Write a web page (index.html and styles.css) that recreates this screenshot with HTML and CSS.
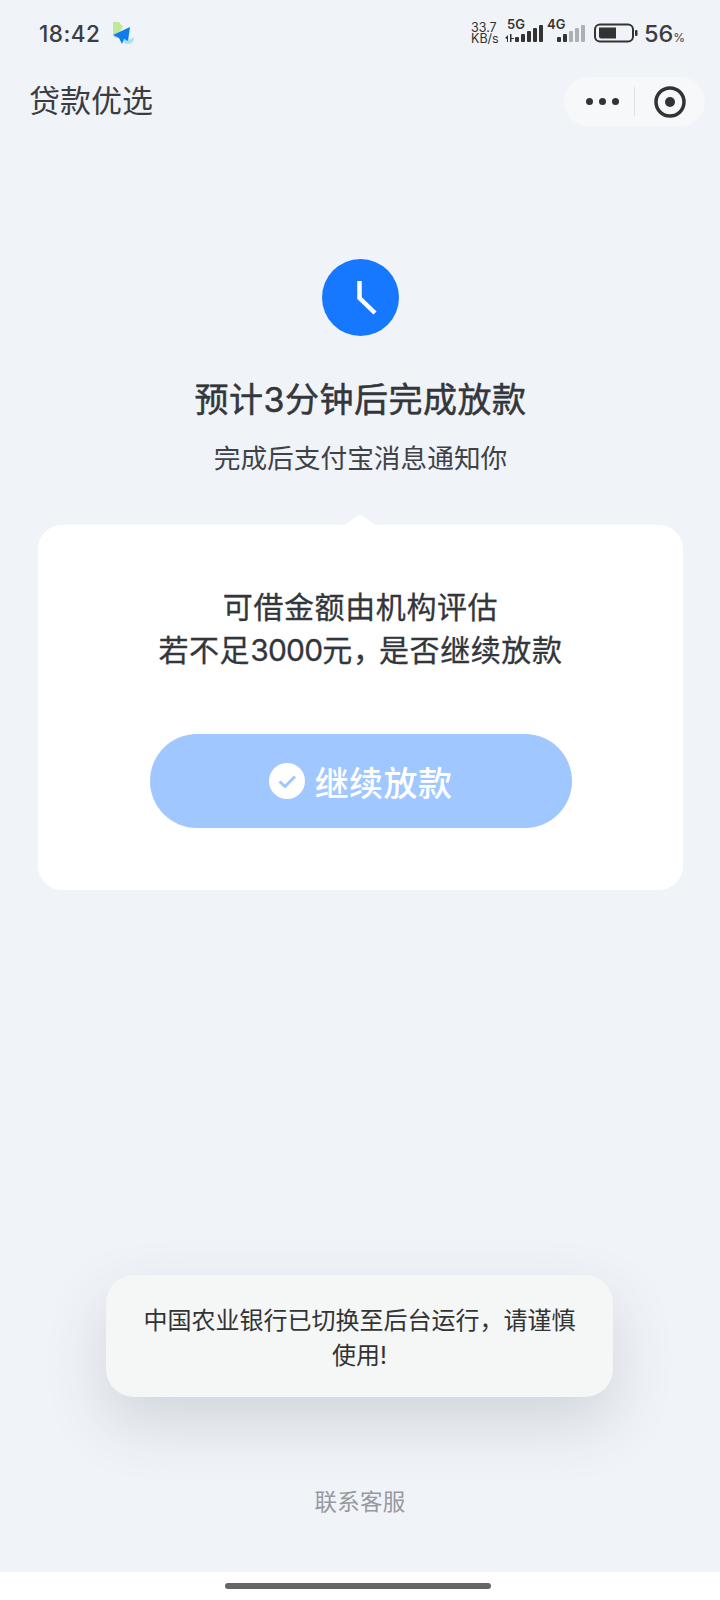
FILE: index.html
```html
<!DOCTYPE html>
<html lang="zh-CN">
<head>
<meta charset="utf-8">
<title>贷款优选</title>
<link rel="stylesheet" href="styles.css">
</head>
<body>
<div class="screen">
  <header class="status">
    <div class="status-left">
      <span class="time">18:42</span>
      <svg class="app-icon" width="24" height="24" viewBox="0 0 24 24">
        <path d="M2 1h6l4 5-4 6-6 2z" fill="#bfe89a"/>
        <path d="M12 19c3 0 6 0 8-1l3-2c0 4-2 7-6 7-3 0-5-2-5-4z" fill="#a4e2f7"/>
        <path d="M2 14l2 3 4 0z" fill="#a4e2f7"/>
        <path d="M19 6L2 14l6 3 3 6 2-5 4 2z" fill="#0f7bf0"/>
      </svg>
    </div>
    <div class="status-right">
      <div class="speed"><span>33.7</span><span>KB/s</span></div>
      <div class="net net-5g">
        <span class="net-label">5G</span>
        <svg width="40" height="18" viewBox="0 0 40 18">
          <path d="M0 13l3-3v7H2v-3zM5 9h1.500v5H9v-1h-2.500v4H5z" fill="#333"/>
          <rect x="10" y="12" width="4" height="5" rx="1" fill="#333"/>
          <rect x="16" y="9" width="4" height="8" rx="1" fill="#333"/>
          <rect x="22" y="6" width="4" height="11" rx="1" fill="#333"/>
          <rect x="28" y="3" width="4" height="14" rx="1" fill="#333"/>
          <rect x="34" y="0" width="4" height="17" rx="1" fill="#333"/>
        </svg>
      </div>
      <div class="net net-4g">
        <span class="net-label">4G</span>
        <svg width="30" height="18" viewBox="0 0 30 18">
          <rect x="0" y="12" width="4" height="5" rx="1" fill="#333"/>
          <rect x="6" y="9" width="4" height="8" rx="1" fill="#333"/>
          <rect x="12" y="6" width="4" height="11" rx="1" fill="#adb0b5"/>
          <rect x="18" y="3" width="4" height="14" rx="1" fill="#adb0b5"/>
          <rect x="24" y="0" width="4" height="17" rx="1" fill="#adb0b5"/>
        </svg>
      </div>
      <svg class="battery" width="44" height="20" viewBox="0 0 44 20">
        <rect x="1" y="1.500" width="38" height="17" rx="5" fill="none" stroke="#333" stroke-width="2"/>
        <path d="M5 4.500h17v11H7a2 2 0 0 1-2-2z" fill="#333"/>
        <rect x="41" y="7" width="2.500" height="6" rx="1" fill="#333"/>
      </svg>
      <span class="battery-level">56<small>%</small></span>
    </div>
  </header>

  <nav class="navbar">
    <h1 class="nav-title">贷款优选</h1>
    <div class="capsule">
      <div class="dots"><i></i><i></i><i></i></div>
      <span class="capsule-line"></span>
      <svg width="32" height="32" viewBox="0 0 32 32">
        <circle cx="16" cy="16" r="14" fill="none" stroke="#333" stroke-width="3.500"/>
        <circle cx="16" cy="16" r="5" fill="#333"/>
      </svg>
    </div>
  </nav>

  <main class="content">
    <svg class="clock" width="77" height="77" viewBox="0 0 77 77">
      <circle cx="38.500" cy="38.500" r="38.500" fill="#1677ff"/>
      <path d="M37.500 22v17L53 54" fill="none" stroke="#fff" stroke-width="4.500"/>
    </svg>
    <h2 class="title">预计3分钟后完成放款</h2>
    <p class="subtitle">完成后支付宝消息通知你</p>
    <section class="card">
      <p class="card-text">可借金额由机构评估<br>若不足<span class="num">3000</span>元<span class="comma">，</span>是否继续放款</p>
      <button class="confirm" type="button">
        <svg width="36" height="36" viewBox="0 0 36 36">
          <circle cx="18" cy="18" r="18" fill="#fff"/>
          <path d="M10.500 18.500l5.500 5 10-10" fill="none" stroke="#a0c7ff" stroke-width="3"/>
        </svg>
        <span>继续放款</span>
      </button>
    </section>
  </main>

  <a class="service">联系客服</a>
  <div class="home-area"><span class="home-bar"></span></div>

  <div class="toast">中国农业银行已切换至后台运行，请谨慎使用!</div>
</div>
</body>
</html>
```

FILE: styles.css
```css
* { box-sizing: border-box; }
html, body { margin: 0; padding: 0; }
body {
  font-family: Inter, "Noto Sans CJK SC", "Noto Sans", sans-serif;
  color: #333;
  background: #fff;
}
.screen {
  position: relative;
  width: 720px;
  height: 1600px;
  background: #f0f3f8;
  display: flex;
  flex-direction: column;
  overflow: hidden;
}
.status {
  height: 66px;
  display: flex;
  justify-content: space-between;
  align-items: center;
  padding: 0 38px 0 39px;
}
.status-left { display: flex; align-items: center; gap: 11px; }
.time {
  font-size: 22.500px;
  font-weight: 500;
  letter-spacing: 0.500px;
  color: #3a3d42;
}
.status-right { display: flex; align-items: center; }
.speed {
  display: flex;
  flex-direction: column;
  font-size: 12.500px;
  line-height: 11px;
  width: 34px;
  align-items: flex-start;
}
.net { position: relative; height: 20px; }
.net svg { display: block; margin-top: 2px; }
.net-5g { width: 42px; }
.net-4g { width: 39px; padding-left: 10px; }
.net-label {
  position: absolute;
  top: -5px;
  font-size: 13px;
  font-weight: 600;
  line-height: 12px;
}
.net-5g .net-label { left: 2px; }
.net-4g .net-label { left: 0; }
.battery { margin-left: 8px; }
.battery-level {
  width: 38px;
  margin-left: 6px;
  font-size: 23.500px;
  font-weight: 500;
  color: #3a3d42;
  white-space: nowrap;
}
.battery-level small { font-size: 12px; font-weight: 400; }
.navbar {
  height: 71px;
  display: flex;
  align-items: center;
  justify-content: space-between;
  padding: 0 15px 0 29px;
}
.nav-title {
  margin: 0 0 1px;
  font-size: 31px;
  font-weight: 400;
  line-height: 40px;
  color: #3a3d42;
}
.capsule {
  width: 141px;
  height: 49px;
  border-radius: 25px;
  background: #f7f8fa;
  display: flex;
  align-items: center;
  padding-left: 22px;
}
.dots { display: flex; gap: 6px; }
.dots i { width: 7px; height: 7px; border-radius: 50%; background: #333; }
.capsule-line { width: 1px; height: 29px; background: #dfe1e4; margin: 0 19px 0 15px; }
.content {
  flex: 1;
  display: flex;
  flex-direction: column;
  align-items: center;
  padding: 122px 37px 0 38px;
}
.clock { display: block; }
.title {
  margin: 40px 0 0;
  font-size: 34px;
  font-weight: 400;
  -webkit-text-stroke: 0.500px #33363b;
  letter-spacing: 0.500px;
  line-height: 48px;
  color: #33363b;
}
.subtitle {
  margin: 15px 0 0;
  font-size: 26.700px;
  line-height: 38px;
  color: #3f4247;
}
.card {
  position: relative;
  width: 645px;
  height: 365px;
  margin-top: 48px;
  padding-top: 61px;
  background: #fff;
  border-radius: 24px;
  display: flex;
  flex-direction: column;
  align-items: center;
}
.card::before {
  content: "";
  position: absolute;
  top: -10px;
  left: 306px;
  width: 32px;
  height: 11px;
  background: #fff;
  clip-path: polygon(0 100%, 40% 8%, 50% 0, 60% 8%, 100% 100%);
}
.card-text {
  margin: 0;
  font-size: 30px;
  font-weight: 400;
  -webkit-text-stroke: 0.300px #33363b;
  letter-spacing: 0.600px;
  line-height: 43px;
  text-align: center;
  color: #33363b;
}
.num { letter-spacing: -0.800px; }
.comma { letter-spacing: -4px; }
.confirm {
  width: 422px;
  height: 94px;
  margin-top: 62px;
  border: 0;
  border-radius: 47px;
  background: #a0c7ff;
  color: #fff;
  font-family: inherit;
  font-size: 34px;
  font-weight: 500;
  letter-spacing: 0.400px;
  display: flex;
  align-items: center;
  justify-content: center;
  gap: 10px;
  padding: 0;
}
.confirm svg { display: block; }
.service {
  text-align: center;
  font-size: 22.500px;
  letter-spacing: 0.200px;
  line-height: 32px;
  color: #96999f;
  margin-bottom: 54px;
}
.home-area {
  height: 28px;
  background: #fff;
  display: flex;
  justify-content: center;
  padding: 11px 4px 0 0;
}
.home-bar { width: 266px; height: 6px; border-radius: 3px; background: #666; }
.toast {
  position: absolute;
  left: 106px;
  top: 1275px;
  width: 507px;
  height: 122px;
  padding: 28px 30px 0;
  background: #f5f6f6;
  border-radius: 28px;
  box-shadow: 0 25px 60px rgba(60, 70, 85, 0.17);
  font-size: 24px;
  line-height: 35px;
  text-align: center;
  color: #333;
}
```
